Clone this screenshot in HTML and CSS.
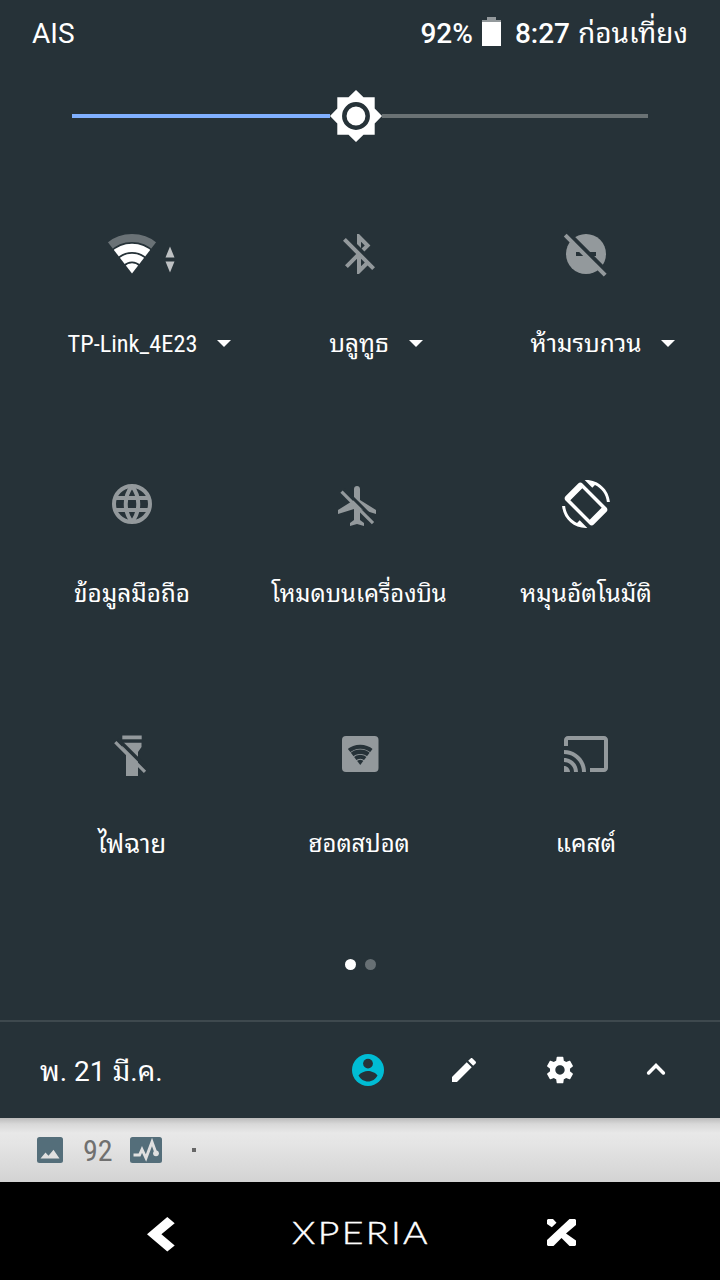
FILE: index.html
```html
<!DOCTYPE html>
<html lang="th">
<head>
<meta charset="utf-8">
<title>Quick settings</title>
<link rel="stylesheet" href="styles.css">
</head>
<body>
<div class="screen">
  <main class="panel">
    <header class="status">
      <span class="carrier">AIS</span>
      <div class="status-right">
        <span class="medium percent">92%</span>
        <svg class="battery" viewBox="0 0 19 29"><path d="M5 0h9v3h5v2H0V3h5z" fill="#93999c"/><path d="M0 5h19v24H0z" fill="#fff"/></svg>
        <span class="medium clock">8:27</span>
        <span class="ampm">ก่อนเที่ยง</span>
      </div>
    </header>

    <div class="brightness">
      <div class="track track-on"></div>
      <svg class="thumb" viewBox="0 0 52 52"><path d="M26 0l7.500 7.300H44.700V18.500L52 26l-7.300 7.500V44.700H33.500L26 52l-7.500-7.300H7.300V33.500L0 26l7.300-7.500V7.300H18.500z" fill="#fff"/><circle cx="26" cy="26" r="11.700" fill="#fff" stroke="#263238" stroke-width="4.500"/></svg>
      <div class="track track-off"></div>
    </div>

    <section class="tiles">
      <div class="tile">
        <svg class="icon" viewBox="0 0 48 48">
          <defs>
            <clipPath id="fan"><path d="M24 43.500L-.3 12V0h48.600v12z"/></clipPath>
          </defs>
          <g clip-path="url(#fan)" fill="none" stroke="#fff">
            <circle cx="24" cy="43.500" r="35.500" stroke-width="8" stroke="#6a7276"/>
            <circle cx="24" cy="43.500" r="25.700" stroke-width="8.300"/>
            <circle cx="24" cy="43.500" r="15.900" stroke-width="7.800"/>
            <circle cx="24" cy="43.500" r="10.200" fill="#fff" stroke="none"/>
          </g>
          <path d="M62 16.500l4.500 11h-9zM62 42.500l4.500-11h-9z" fill="#bec1c3"/>
        </svg>
        <div class="label"><span class="name latin">TP-Link_4E23</span><i class="caret"></i></div>
      </div>
      <div class="tile">
        <svg class="icon off" viewBox="0 0 24 24"><path d="M13 5.830l1.880 1.880-1.600 1.600 1.410 1.410 3.020-3.020L12 2h-1v5.030l2 2v-3.200zM5.410 4L4 5.410 10.590 12 5 17.590 6.410 19 11 14.410V22h1l4.290-4.290 2.300 2.290L20 18.590 5.410 4zM13 18.170v-3.760l1.880 1.880L13 18.170z"/></svg>
        <div class="label"><span class="name">บลูทูธ</span><i class="caret"></i></div>
      </div>
      <div class="tile">
        <svg class="icon off" viewBox="0 0 48 48">
          <circle cx="24" cy="24" r="20"/>
          <path d="M14 22h20v4H14z" fill="#263238"/>
          <path d="M4 1L47 44" stroke="#263238" stroke-width="4.500"/>
          <path d="M3.200 5.200L43.200 45.200" stroke="#93999c" stroke-width="4"/>
        </svg>
        <div class="label"><span class="name">ห้ามรบกวน</span><i class="caret"></i></div>
      </div>

      <div class="tile">
        <svg class="icon" viewBox="0 0 48 48" fill="none" stroke="#93999c" stroke-width="4">
          <circle cx="24" cy="24" r="18"/>
          <path d="M7 18h34M7 30h34M24 6a29 29 0 0 0 0 36M24 6a29 29 0 0 1 0 36"/>
        </svg>
        <div class="label"><span class="name">ข้อมูลมือถือ</span></div>
      </div>
      <div class="tile">
        <svg class="icon off" viewBox="1 -2 48 48">
          <path d="M42 32v-4l-16-10V7c0-1.700-1.300-3-3-3s-3 1.300-3 3v11L4 28v4l16-5v11l-4 3v3l7-2 7 2v-3l-4-3V27z"/>
          <path d="M10 7L42 39" stroke="#263238" stroke-width="3"/>
          <path d="M7.500 9.700L39 41.200" stroke="#93999c" stroke-width="3.200"/>
        </svg>
        <div class="label"><span class="name tight">โหมดบนเครื่องบิน</span></div>
      </div>
      <div class="tile">
        <svg class="icon" viewBox="0 0 48 48" fill="#fff">
          <path fill-rule="evenodd" d="M20.460 3.500c-1.180-1.180-3.080-1.180-4.240 0L3.500 16.220c-1.180 1.180-1.180 3.080 0 4.240L27.540 44.500c1.180 1.180 3.080 1.180 4.240 0L44.500 31.780c1.180-1.180 1.180-3.080 0-4.240zM20.300 8.300l19.400 19.400-12 12L8.300 20.300z"/>
          <g transform="scale(2)"><path d="M16.480 2.520c3.270 1.550 5.610 4.720 5.970 8.480h1.500C23.440 4.840 18.290 0 12 0l-.66.030 3.810 3.810 1.330-1.320zM7.520 21.480C4.250 19.940 1.910 16.760 1.550 13H.050C.560 19.160 5.710 24 12 24l.66-.030-3.810-3.810-1.330 1.320z"/></g>
        </svg>
        <div class="label"><span class="name">หมุนอัตโนมัติ</span></div>
      </div>

      <div class="tile">
        <svg class="icon off" viewBox="0 0 48 48">
          <path d="M14.300 12.700h19.200V17L30 22v24H18V22l-3.700-5z"/>
          <path d="M10 9.200L38 37.200" stroke="#263238" stroke-width="3.500"/>
          <path d="M14.300 5.500h19.400v3.800H14.300z"/>
          <path d="M7.300 12.200L37 41.900" stroke="#93999c" stroke-width="3.200"/>
        </svg>
        <div class="label"><span class="name wide">ไฟฉาย</span></div>
      </div>
      <div class="tile">
        <svg class="icon off" viewBox="0 0 48 48">
          <rect x="7" y="6" width="36.500" height="36" rx="4"/>
          <g transform="translate(12.900 12.600) scale(.514)" clip-path="url(#fan)" fill="none" stroke="#263238">
            <circle cx="24" cy="43.500" r="35.500" stroke-width="8"/>
            <circle cx="24" cy="43.500" r="25.700" stroke-width="8.300"/>
            <circle cx="24" cy="43.500" r="15.900" stroke-width="7.800"/>
            <circle cx="24" cy="43.500" r="10.200" fill="#263238" stroke="none"/>
          </g>
        </svg>
        <div class="label"><span class="name tight">ฮอตสปอต</span></div>
      </div>
      <div class="tile">
        <svg class="icon off" viewBox="0 0 24 24"><path d="M21 3H3c-1.100 0-2 .9-2 2v3h2V5h18v14h-7v2h7c1.100 0 2-.9 2-2V5c0-1.100-.9-2-2-2zM1 18v3h3c0-1.660-1.340-3-3-3zm0-4v2c2.760 0 5 2.240 5 5h2c0-3.870-3.130-7-7-7zm0-4v2c4.970 0 9 4.030 9 9h2c0-6.080-4.930-11-11-11z"/></svg>
        <div class="label"><span class="name">แคสต์</span></div>
      </div>
    </section>

    <div class="pager"><i class="dot dot-on"></i><i class="dot"></i></div>

    <footer class="footer">
      <span class="date">พ. 21 มี.ค.</span>
      <div class="actions">
        <svg viewBox="0 0 32 32"><circle cx="16" cy="16" r="16" fill="#00bcd4"/><circle cx="16" cy="9.600" r="4.900" fill="#263238"/><path d="M6.500 21.500C8.500 18.500 13 17 16 17s7.500 1.500 9.500 4.500c-2 3.800-5.500 6-9.500 6s-7.500-2.200-9.500-6z" fill="#263238"/></svg>
        <svg viewBox="0 0 24 24" fill="#fff"><path d="M3 17.250V21h3.750L17.810 9.940l-3.750-3.750L3 17.250zM20.710 7.040c.39-.39.39-1.020 0-1.410l-2.340-2.340c-.39-.39-1.020-.39-1.410 0l-1.830 1.830 3.750 3.750 1.830-1.830z"/></svg>
        <svg viewBox="0 0 24 24" fill="#fff"><path d="M19.430 12.980c.04-.32.070-.64.070-.98s-.03-.66-.07-.98l2.110-1.650c.19-.15.24-.42.12-.64l-2-3.460c-.12-.22-.39-.3-.61-.22l-2.490 1c-.52-.4-1.080-.73-1.690-.98l-.38-2.650C14.460 2.180 14.250 2 14 2h-4c-.25 0-.46.180-.49.420l-.38 2.650c-.61.250-1.170.590-1.690.98l-2.490-1c-.23-.09-.49 0-.61.220l-2 3.460c-.13.220-.07.490.12.640l2.110 1.650c-.04.320-.07.650-.07.980s.03.660.07.980l-2.110 1.650c-.19.150-.24.420-.12.640l2 3.460c.12.220.39.300.61.220l2.490-1c.52.400 1.080.730 1.690.980l.38 2.650c.03.240.24.420.49.420h4c.25 0 .46-.18.490-.42l.38-2.650c.61-.25 1.170-.59 1.690-.98l2.490 1c.23.090.49 0 .61-.22l2-3.460c.12-.22.070-.49-.12-.64l-2.110-1.650zM12 15.500c-1.930 0-3.500-1.570-3.500-3.500s1.570-3.500 3.500-3.500 3.500 1.570 3.500 3.500-1.570 3.500-3.500 3.500z"/></svg>
        <svg viewBox="0 0 32 32"><path d="M8.600 18.900L16 11.500l7.400 7.400" fill="none" stroke="#fff" stroke-width="3.500" stroke-linecap="round"/></svg>
      </div>
    </footer>
  </main>

  <div class="notifications">
    <svg class="note-image" viewBox="0 0 26 26"><rect width="26" height="26" rx="2.500" fill="#546e7a"/><path d="M3.500 21.500l5-6 3 3.300 5-6 6 8.700z" fill="#e0e0e0"/></svg>
    <span class="note-level">92</span>
    <svg class="note-activity" viewBox="0 0 32 26"><rect width="32" height="26" rx="2.500" fill="#546e7a"/><path d="M3.500 18h6l2.500-5.500 4 8.500 6-16 4 11" fill="none" stroke="#e0e0e0" stroke-width="2.900"/><circle cx="26" cy="16.300" r="2.900" fill="#e0e0e0"/></svg>
    <i class="note-more"></i>
  </div>

  <nav class="navbar">
    <svg class="nav-back" viewBox="0 0 28 35"><path d="M20.300 0l7.400 6.200L14.400 17.300l13.300 11.100-7.400 6.200L0 17.300z" fill="#fff"/></svg>
    <svg class="brand" viewBox="0 0 138 40"><text x="0" y="31" textLength="138" lengthAdjust="spacingAndGlyphs">XPERIA</text></svg>
    <svg class="nav-close" viewBox="0 0 29 27" fill="#fff"><path d="M1 0h5l3.500 3.800-4.700 4.400L0 5V1zM22.500 0H28l1 1v5L19 14.500l10 7V26l-1 1h-5.500l-8-8L6.500 27H1l-1-1v-5z"/></svg>
  </nav>
</div>
</body>
</html>
```
FILE: styles.css
```css
body {
  margin: 0;
  background: #000;
}

.screen {
  width: 720px;
  height: 1280px;
  display: flex;
  flex-direction: column;
  overflow: hidden;
  color: #fff;
  font-family: Roboto, "Noto Sans Thai Looped", "Noto Looped Thai", "Droid Sans Thai", Garuda, Loma, Waree, Norasi, "Noto Sans Thai", sans-serif;
  font-size: 28px;
}

svg {
  display: block;
  flex: none;
  overflow: visible;
}

.panel {
  height: 1118px;
  flex: none;
  display: flex;
  flex-direction: column;
  background: #263238;
}

.status {
  height: 66px;
  padding: 0 32px;
  display: flex;
  justify-content: space-between;
  align-items: center;
  line-height: 66px;
  white-space: nowrap;
}

.carrier,
.medium,
.ampm {
  height: 64px;
}

.status-right {
  display: flex;
  align-items: center;
}

.medium {
  font-weight: 500;
}

.battery {
  width: 19px;
  height: 29px;
  margin: 0 14px 3px 9px;
}

.ampm {
  margin-left: 8px;
}

.brightness {
  height: 100px;
  padding: 0 72px;
  display: flex;
  align-items: center;
}

.track {
  height: 4px;
}

.track-on {
  width: 258px;
  background: #80b0ff;
}

.track-off {
  flex: 1;
  background: #6a7274;
}

.thumb {
  width: 52px;
  height: 52px;
}

.tiles {
  height: 750px;
  padding: 64px 0 0 18.5px;
  display: grid;
  grid-template-columns: repeat(3, 227px);
  grid-template-rows: repeat(3, 250px);
}

.tile {
  display: flex;
  flex-direction: column;
  align-items: center;
}

.icon {
  width: 48px;
  height: 48px;
}

.off {
  fill: #93999c;
}

.label {
  height: 40px;
  margin-top: 46px;
  display: flex;
  align-items: center;
  font-size: 24.4px;
  line-height: 40px;
  white-space: nowrap;
}

.latin {
  margin-left: 1px;
  font-size: 24.3px;
  font-stretch: 75%;
}

.tight {
  font-size: 23.8px;
}

.wide {
  font-size: 25.5px;
}

.caret {
  margin: -2px -34px 0 20px;
  border: 7px solid transparent;
  border-top-color: #fff;
  border-bottom: 0;
}

.pager {
  display: flex;
  justify-content: center;
  gap: 9px;
  margin-top: -21.5px;
}

.dot {
  width: 11px;
  height: 11px;
  border-radius: 50%;
  background: #677074;
}

.dot-on {
  background: #fff;
}

.footer {
  height: 96px;
  margin-top: auto;
  padding: 0 16px 0 40px;
  border-top: 2px solid #3e494e;
  display: flex;
  justify-content: space-between;
  align-items: center;
}

.date {
  padding-bottom: 4px;
}

.actions {
  display: flex;
}

.actions svg {
  width: 32px;
  height: 32px;
  margin: 0 32px;
}

.notifications {
  height: 64px;
  flex: none;
  display: flex;
  align-items: center;
  padding-left: 37px;
  background: linear-gradient(#bbb, #d8d8d8 6px, #e8e8e8 15px, #e5e5e5 25px, #d3d3d3);
}

.note-image {
  width: 26px;
  height: 26px;
}

.note-level {
  margin: 0 17px 0 20px;
  width: 30px;
  color: #707070;
  font-size: 30px;
  font-stretch: 75%;
}

.note-activity {
  width: 32px;
  height: 26px;
}

.note-more {
  width: 4px;
  height: 4px;
  margin-left: 30px;
  background: #666;
}

.navbar {
  flex: 1;
  display: flex;
  align-items: center;
  background: #000;
}

.nav-back {
  width: 28px;
  height: 35px;
  margin: 6px 0 0 147px;
}

.brand {
  width: 138px;
  height: 40px;
  margin: 3px 0 0 117px;
  fill: #fff;
  stroke: #fff;
  stroke-width: .4px;
  font: 300 31px Lato, sans-serif;
  letter-spacing: 2px;
}

.nav-close {
  width: 29px;
  height: 27px;
  margin: 3px 0 0 117px;
}
```
